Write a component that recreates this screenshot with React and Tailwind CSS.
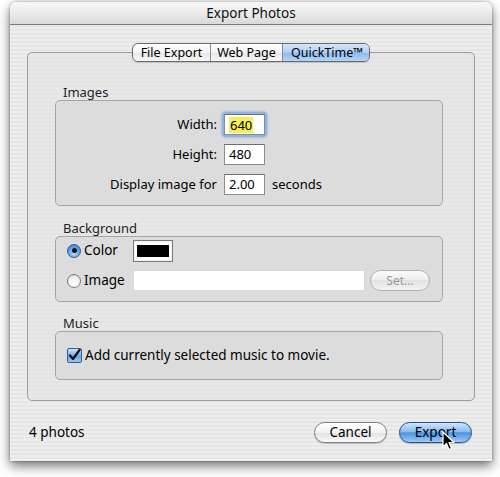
import React from "react";

const font = { fontFamily: '"Noto Sans", "DejaVu Sans", sans-serif' };

function Tab({ children, active, first, last }) {
  return (
    <div
      className={
        "flex h-full items-center justify-center text-[12.5px] text-black " +
        (active
          ? "bg-[linear-gradient(#d4e6fa,#a9cdf3_50%,#8dbdf0_50%,#bcdcfb)] "
          : "bg-[linear-gradient(#ffffff,#f3f3f3_50%,#e8e8e8_50%,#fbfbfb)] ") +
        (first ? "rounded-l-[6px] " : "border-l border-[#8a8a8a] ") +
        (last ? "rounded-r-[6px] " : "")
      }
    >
      {children}
    </div>
  );
}

function Field({ children, className = "" }) {
  return (
    <div
      className={
        "flex h-[21px] items-center border border-[#8c8c8c] border-t-[#6e6e6e] bg-white pl-[4px] text-[13px] text-black " +
        className
      }
    >
      {children}
    </div>
  );
}

export default function App() {
  return (
    <div className="relative h-[477px] w-[500px] overflow-hidden bg-white" style={font}>
      <div className="ml-[10px] mt-[2px] flex h-[459px] w-[482px] flex-col overflow-hidden rounded-t-[6px] shadow-[0_5px_12px_rgba(0,0,0,0.55),0_0_3px_rgba(0,0,0,0.35)]">
        {/* title bar */}
        <div className="flex h-[23px] shrink-0 items-center justify-center border-b border-[#7c7c7c] bg-[linear-gradient(#f8f8f8,#ebebeb_50%,#d9d9d9)] text-[13.5px] text-[#111]">
          Export Photos
        </div>
        {/* body */}
        <div className="flex flex-1 flex-col bg-[repeating-linear-gradient(0deg,#ededed_0px,#ededed_2px,#e6e6e6_2px,#e6e6e6_4px)] px-[17px] pt-[18px]">
          {/* tabs */}
          <div className="relative z-10 flex justify-center">
            <div className="grid h-[19px] w-[238px] grid-cols-[77px_72px_89px] overflow-hidden rounded-[6px] border border-[#6a6a6a] shadow-[0_1px_1px_rgba(0,0,0,0.15)]">
              <Tab first>File Export</Tab>
              <Tab>Web Page</Tab>
              <Tab active last>
                QuickTime™
              </Tab>
            </div>
          </div>
          {/* group box */}
          <div className="mt-[-10px] flex h-[349px] flex-col rounded-[5px] border border-[#9c9c9c] bg-[rgba(225,225,225,0.55)] pb-[20px] pl-[27px] pr-[31px] pt-[31px]">
            <div className="h-[16px] pl-[8px] text-[13px] leading-[16px] text-[#222]">Images</div>
            <div className="h-[106px] rounded-[5px] border border-[#a5a5a5] bg-[#dcdcdc] pl-[51px] pt-[13px]">
              <div className="grid grid-cols-[110px_41px_auto] items-center justify-start gap-x-[7px] gap-y-[9px] text-[13px] text-black">
                <div className="text-right">Width:</div>
                <div className="rounded-[2px] shadow-[0_0_0_2px_#8fb4e4,0_0_2px_3px_rgba(120,165,225,0.5)]">
                  <Field>
                    <span className="bg-[#f4ee5a] px-[1px] leading-[16px]">640</span>
                  </Field>
                </div>
                <div />
                <div className="text-right">Height:</div>
                <Field>480</Field>
                <div />
                <div className="text-right">Display image for</div>
                <Field>2.00</Field>
                <div>seconds</div>
              </div>
            </div>

            <div className="mt-[14px] h-[16px] pl-[8px] text-[13px] leading-[16px] text-[#222]">Background</div>
            <div className="flex h-[66px] flex-col gap-[9px] rounded-[5px] border border-[#a5a5a5] bg-[#dcdcdc] pl-[11px] pr-[12px] pt-[3px]">
              <div className="flex h-[21px] items-center">
                <div className="flex w-[66px] items-center gap-[3px]">
                  <div className="flex h-[14px] w-[14px] items-center justify-center rounded-full border border-[#2f5d96] bg-[radial-gradient(circle_at_50%_70%,#b9dcfb,#5a9ae0_60%,#3a78c8)]">
                    <div className="h-[5px] w-[5px] rounded-full bg-[#111]" />
                  </div>
                  <span className="text-[13.5px] text-black">Color</span>
                </div>
                <div className="flex h-[22px] w-[40px] items-center justify-center border border-[#7a7a7a] bg-white shadow-[inset_0_0_0_1px_#f2f2f2]">
                  <div className="h-[12px] w-[32px] bg-black" />
                </div>
              </div>
              <div className="flex h-[21px] items-center">
                <div className="flex w-[66px] items-center gap-[3px]">
                  <div className="h-[14px] w-[14px] rounded-full border border-[#7a7a7a] bg-[radial-gradient(circle_at_50%_70%,#ffffff,#f0f0f0_55%,#cfcfcf)]" />
                  <span className="text-[13.5px] text-black">Image</span>
                </div>
                <div className="h-[21px] w-[232px] border border-[#d8d8d8] bg-white" />
                <div className="ml-[5px] flex h-[21px] w-[60px] items-center justify-center rounded-full border border-[#b0b0b0] bg-[linear-gradient(#fbfbfb,#ececec_50%,#e2e2e2_50%,#f4f4f4)] text-[12px] text-[#9a9a9a]">
                  Set...
                </div>
              </div>
            </div>

            <div className="mt-[13px] h-[16px] pl-[8px] text-[13px] leading-[16px] text-[#222]">Music</div>
            <div className="flex h-[49px] items-center rounded-[5px] border border-[#a5a5a5] bg-[#dcdcdc] pl-[11px]">
              <div className="flex h-[15px] w-[15px] items-center justify-center rounded-[2px] border border-[#2f5d96] bg-[linear-gradient(#cfe4fb,#6ea6e6_55%,#9cc8f4)]">
                <svg width="13" height="13" viewBox="0 0 13 13">
                  <path d="M2 6.5 L5 10 L11.5 1" fill="none" stroke="#111" strokeWidth="2.2" strokeLinecap="round" strokeLinejoin="round" />
                </svg>
              </div>
              <span className="ml-[3px] text-[13.5px] text-black">Add currently selected music to movie.</span>
            </div>
          </div>

          {/* bottom bar */}
          <div className="flex items-center pl-[2px] pr-[3px] pt-[21px]">
            <span className="flex-1 text-[13.5px] text-black">4 photos</span>
            <div className="flex h-[21px] w-[73px] items-center justify-center rounded-full border border-[#7d7d7d] bg-[linear-gradient(#ffffff,#f2f2f2_50%,#e0e0e0_50%,#fafafa)] text-[13.5px] text-black shadow-[0_1px_1px_rgba(0,0,0,0.2)]">
              Cancel
            </div>
            <div className="ml-[12px] flex h-[21px] w-[73px] items-center justify-center rounded-full border border-[#2b4f85] bg-[linear-gradient(#cfe4fb,#8dbdf0_45%,#4b93e3_52%,#9ccbf6)] text-[13.5px] text-black shadow-[0_1px_1px_rgba(0,0,0,0.25)]">
              Export
            </div>
          </div>
        </div>
      </div>

      {/* mouse cursor */}
      <svg className="absolute left-[442px] top-[431px]" width="14" height="20" viewBox="0 0 14 20">
        <path d="M1 1 L1 16 L4.5 12.5 L7 18.5 L9.5 17.5 L7 11.5 L12 11.5 Z" fill="#000" stroke="#fff" strokeWidth="1.2" strokeLinejoin="round" />
      </svg>
    </div>
  );
}
